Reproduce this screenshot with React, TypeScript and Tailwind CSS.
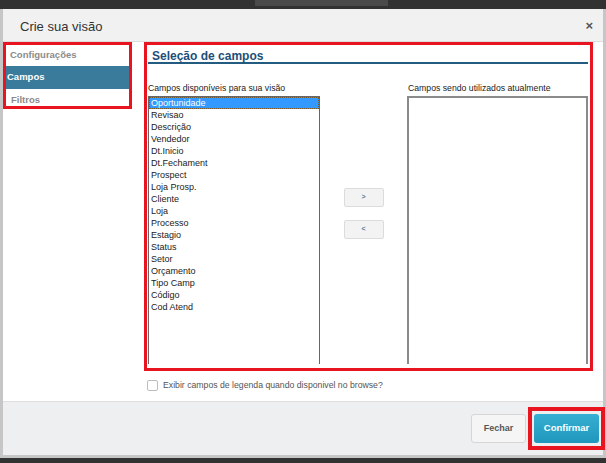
import { useState } from 'react'

const available = [
  'Oportunidade',
  'Revisao',
  'Descrição',
  'Vendedor',
  'Dt.Inicio',
  'Dt.Fechament',
  'Prospect',
  'Loja Prosp.',
  'Cliente',
  'Loja',
  'Processo',
  'Estagio',
  'Status',
  'Setor',
  'Orçamento',
  'Tipo Camp',
  'Código',
  'Cod Atend',
]

const font = { fontFamily: '"Liberation Sans", Arial, sans-serif' }

export default function App() {
  const [selected, setSelected] = useState('Oportunidade')
  const [legend, setLegend] = useState(false)

  return (
    <div className="h-[463px] w-[606px] overflow-hidden bg-[#323232]" style={font}>
      {/* background app strip behind the dialog */}
      <div className="flex h-[9px] items-start">
        <div className="ml-[255px] h-[6px] w-[133px] bg-[#4a4a4a]" />
      </div>

      <div className="bg-[#c6c6c6] pb-[3px] pl-[3px] pr-[3px]">
        <div className="bg-white">
          {/* Header */}
          <div className="flex h-[33px] items-center justify-between border-b border-[#dcdcdc] bg-[#f1f1f1] pl-[17px] pr-[10px]">
            <span className="pt-[3px] text-[13px] text-[#333]">Crie sua visão</span>
            <span className="text-[13px] font-bold leading-none text-[#555]">×</span>
          </div>

          {/* Body */}
          <div className="flex h-[359px]">
            {/* Steps nav */}
            <div className="h-[67px] w-[129px] border-[3px] border-[#e8141f] text-[9.5px] font-bold">
              <div className="h-[21px] pl-[4px] pt-[3px] leading-[13px] text-[#8b8b8b]">Configurações</div>
              <div className="flex h-[23px] items-center bg-[#3a7a9b] pl-[1px] text-white">Campos</div>
              <div className="pl-[5px] pt-[5px] leading-[11px] text-[#8b8b8b]">Filtros</div>
            </div>

            <div className="ml-[12px] flex flex-col">
              {/* Field selection */}
              <div className="h-[329px] w-[449px] border-[3px] border-[#e8141f] pl-[1px] pr-[2px]">
                <div className="h-[19px] border-b-2 border-[#245c81] pl-[4px] pt-[5px] text-[12px] font-bold leading-[12px] text-[#1d4f78]">
                  Seleção de campos
                </div>

                <div className="flex pt-[19px] text-[8.7px] text-[#222]">
                  <div className="w-[172px]">
                    <div className="leading-[11px]">Campos disponíveis para sua visão</div>
                    <div className="mt-[2px] h-[268px] border border-b-0 border-[#666] text-[9px]">
                      {available.map((item) => (
                        <div
                          key={item}
                          onClick={() => setSelected(item)}
                          className={`h-[12px] pl-[2px] leading-[12px] ${
                            selected === item
                              ? 'bg-[#3399ff] text-white outline-1 outline-dotted outline-[#7a5a2a] -outline-offset-1'
                              : ''
                          }`}
                        >
                          {item}
                        </div>
                      ))}
                    </div>
                  </div>

                  <div className="flex flex-1 flex-col items-center pt-[105px]">
                    <button className="h-[19px] w-[40px] rounded-[2px] border border-[#dcdcdc] bg-[#f3f3f3] text-[7px] font-bold text-[#5a7a9a]">
                      &gt;
                    </button>
                    <button className="mt-[13px] h-[19px] w-[40px] rounded-[2px] border border-[#dcdcdc] bg-[#f3f3f3] text-[7px] font-bold text-[#5a7a9a]">
                      &lt;
                    </button>
                  </div>

                  <div className="w-[181px]">
                    <div className="pl-[1px] leading-[11px]">Campos sendo utilizados atualmente</div>
                    <div className="mt-[2px] h-[268px] border-2 border-b-0 border-[#8a8a8a]" />
                  </div>
                </div>
              </div>

              <label className="mt-[8px] flex items-center pl-[3px] text-[8.7px] text-[#555]">
                <input
                  type="checkbox"
                  checked={legend}
                  onChange={() => setLegend(!legend)}
                  className="h-[11px] w-[11px] appearance-none rounded-[2px] border border-[#bdbdbd] bg-white"
                />
                <span className="ml-[5px]">Exibir campos de legenda quando disponivel no browse?</span>
              </label>
            </div>
          </div>

          {/* Footer */}
          <div className="flex h-[54px] items-center justify-end border-t border-[#dedede] bg-[#eeeff0]">
            <button className="mr-[2px] h-[29px] w-[55px] rounded-[3px] border border-[#d6d6d6] bg-[#f5f5f5] text-[9px] font-bold text-[#555]">
              Fechar
            </button>
            <div className="-mr-[2px] border-[4px] border-[#e8141f] px-[2px] py-[3px]">
              <button className="h-[29px] w-[65px] rounded-[3px] bg-gradient-to-b from-[#36afd2] to-[#1f97bd] text-[9.5px] font-bold text-white">
                Confirmar
              </button>
            </div>
          </div>
        </div>
      </div>
    </div>
  )
}
